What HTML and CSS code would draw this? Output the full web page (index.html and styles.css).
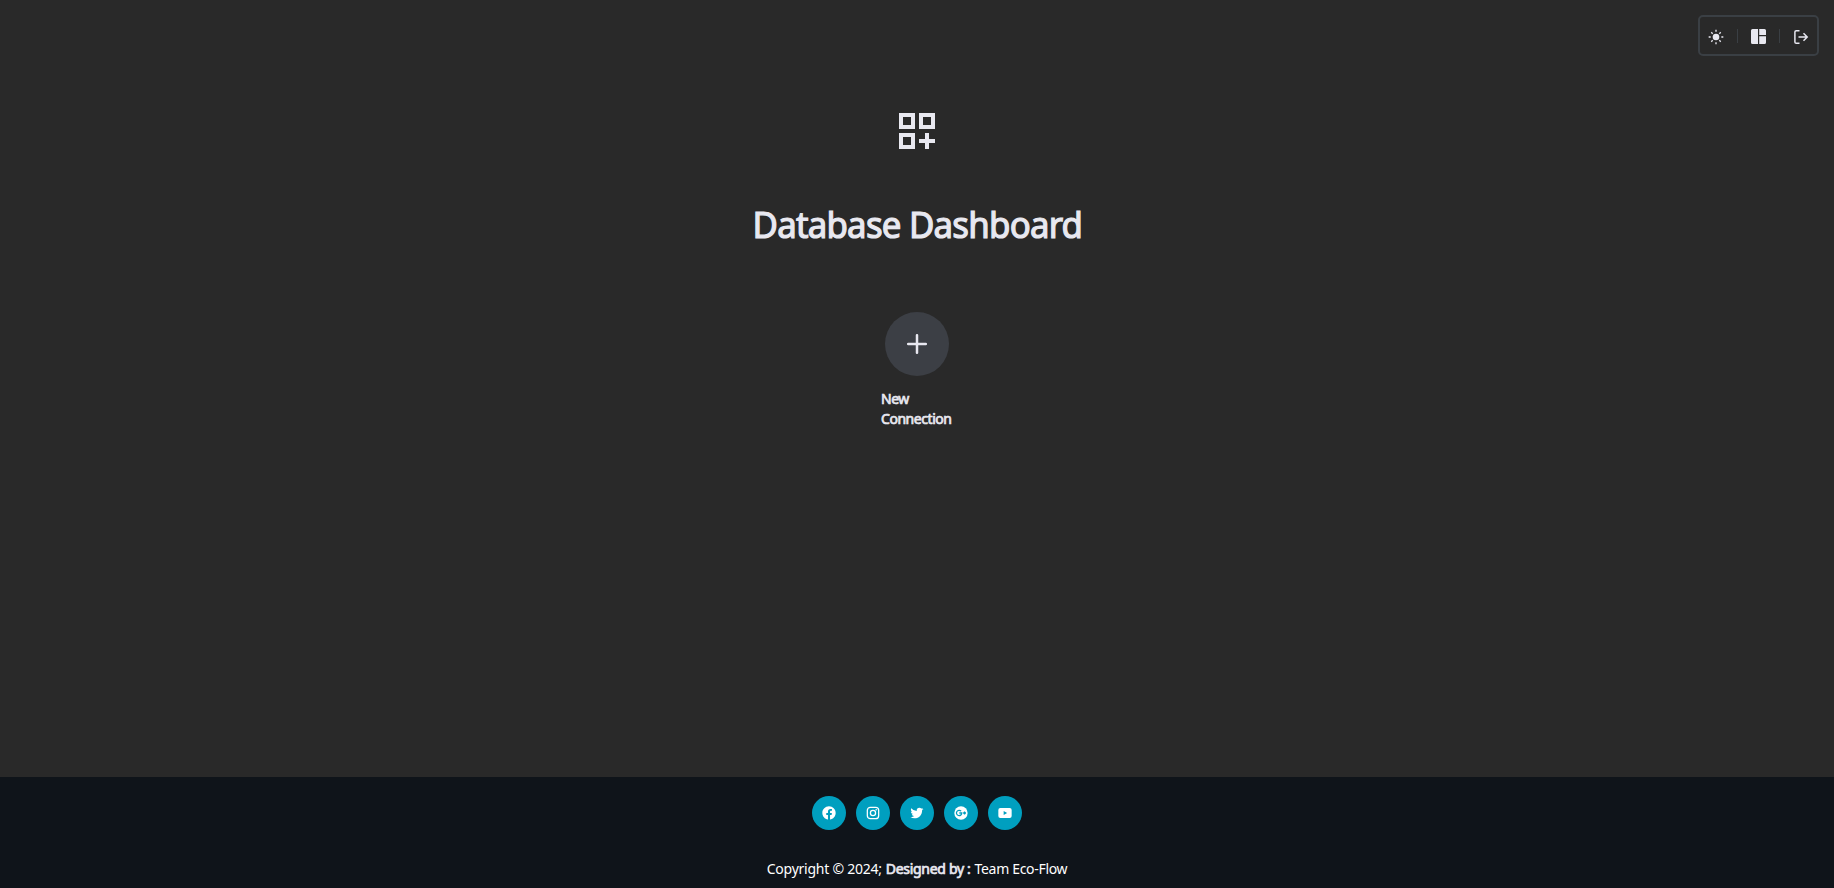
FILE: index.html
```html
<!DOCTYPE html>
<html lang="en">
<head>
<meta charset="utf-8">
<title>Database Dashboard</title>
<link rel="stylesheet" href="styles.css">
</head>
<body>
<header class="topbar">
  <nav class="tools">
    <svg class="tool" viewBox="0 0 24 24"><circle cx="12" cy="12" r="5"/><path d="M11 1h2v3h-2zM11 20h2v3h-2zM1 11h3v2H1zM20 11h3v2h-3zM4.2 5.6l1.4-1.4 2.1 2.1-1.4 1.4zM16.3 17.7l1.4-1.4 2.1 2.1-1.4 1.4zM16.3 6.3l2.1-2.1 1.4 1.4-2.1 2.1zM4.2 18.4l2.1-2.1 1.4 1.4-2.1 2.1z"/></svg>
    <span class="divider"></span>
    <svg class="tool layout" viewBox="0 0 15 15"><path d="M1.500 0H7v15H1.500Q0 15 0 13.500V1.500Q0 0 1.500 0zM8.200 0h5.300Q15 0 15 1.500V6H8.200zM8.200 7.200H15v6.300Q15 15 13.500 15H8.200z"/></svg>
    <span class="divider"></span>
    <svg class="tool logout" viewBox="0 0 16 16"><path d="M6.500 1.700H3.300Q1.900 1.700 1.900 3.100v9.800Q1.900 14.300 3.300 14.300h3.200M5.500 8h8.500M10.500 4.300 14.200 8l-3.700 3.700"/></svg>
  </nav>
</header>
<main class="main">
  <svg class="brand" viewBox="0 0 18 18"><path fill-rule="evenodd" d="M0 0h8v8H0zM2 2v4h4V2zM10 0h8v8h-8zM12 2v4h4V2zM0 10h8v8H0zM2 12v4h4v-4zM13 10h2v3h3v2h-3v3h-2v-3h-3v-2h3z"/></svg>
  <h1 class="title">Database Dashboard</h1>
  <a class="connection">
    <span class="add"><svg class="plus" viewBox="0 0 20 20"><path d="M10 1.200v17.600M1.200 10h17.600"/></svg></span>
    <span class="label">New<br>Connection</span>
  </a>
</main>
<footer class="footer">
  <div class="socials">
    <a class="social"><svg viewBox="0 0 24 24"><path d="M12.001 2.002c-5.522 0-9.999 4.477-9.999 9.999 0 4.990 3.656 9.126 8.437 9.879v-6.988h-2.540v-2.891h2.540V9.798c0-2.508 1.493-3.891 3.776-3.891 1.094 0 2.240.195 2.240.195v2.459h-1.264c-1.240 0-1.628.772-1.628 1.563v1.875h2.771l-.443 2.891h-2.328v6.988C18.344 21.129 22 16.992 22 12.001c0-5.522-4.477-9.999-9.999-9.999z"/></svg></a>
    <a class="social"><svg viewBox="0 0 24 24"><g fill="none" stroke="currentColor" stroke-width="1.900"><rect x="3.500" y="3.500" width="17" height="17" rx="4.500"/><circle cx="12" cy="12" r="3.900"/></g><circle cx="16.800" cy="7.200" r="1.200"/></svg></a>
    <a class="social"><svg viewBox="0 0 24 24"><path d="M19.633 7.997c.013.175.013.349.013.523 0 5.325-4.053 11.461-11.460 11.461-2.282 0-4.402-.661-6.186-1.809.324.037.636.050.973.050a8.070 8.070 0 0 0 5.001-1.721 4.036 4.036 0 0 1-3.767-2.793c.249.037.499.062.761.062.361 0 .724-.050 1.061-.137a4.027 4.027 0 0 1-3.230-3.953v-.050c.537.299 1.160.486 1.820.511a4.022 4.022 0 0 1-1.796-3.354c0-.748.199-1.434.548-2.032a11.457 11.457 0 0 0 8.306 4.215c-.062-.300-.100-.611-.100-.923a4.026 4.026 0 0 1 4.028-4.028c1.160 0 2.207.486 2.943 1.272a7.957 7.957 0 0 0 2.556-.973 4.020 4.020 0 0 1-1.771 2.220 8.073 8.073 0 0 0 2.319-.624 8.645 8.645 0 0 1-2.019 2.083z"/></svg></a>
    <a class="social"><svg viewBox="0 0 24 24"><circle cx="12" cy="12" r="10"/><path class="cut" d="M12.200 9.300A4 4 0 1 0 13.200 12H9.500M17.300 9.800v4.400M15.100 12h4.400"/></svg></a>
    <a class="social"><svg viewBox="0 0 24 24"><path fill-rule="evenodd" d="M5 4.500h14q3 0 3 3v9q0 3-3 3H5q-3 0-3-3v-9q0-3 3-3zM10 9v6l5.200-3z"/></svg></a>
  </div>
  <p class="copy"><span class="copy-a">Copyright © 2024;</span> <b class="by">Designed by :</b> <span class="team">Team Eco-Flow</span></p>
</footer>
</body>
</html>
```
FILE: styles.css
```css
* { box-sizing: border-box; }
html { height: 100%; overflow: hidden; background: #292929; }
body {
  margin: 0;
  height: 100%;
  overflow: hidden;
  display: flex;
  flex-direction: column;
  background: #292929;
  color: #e8e8f0;
  font-family: "Noto Sans", "Open Sans", sans-serif;
  font-weight: 400;
}
.topbar { display: flex; justify-content: flex-end; padding: 15px 15px 0 0; height: 56px; }
.tools {
  display: flex;
  align-items: center;
  justify-content: space-between;
  width: 121px;
  height: 41px;
  padding: 0 8px;
  border: 2px solid #3a3f44;
  border-radius: 5px;
}
.tool { width: 16px; height: 16px; margin-top: 2px; fill: currentColor; }
.layout { width: 15px; height: 15px; margin-top: 1px; }
.logout { fill: none; stroke: currentColor; stroke-width: 1.500; }
.divider { width: 1px; height: 14px; margin-top: 1px; background: #3a3f44; }
.main { flex: 1; display: flex; flex-direction: column; align-items: center; padding-top: 57px; }
.brand { width: 36px; height: 36px; fill: currentColor; }
.title {
  margin: 49px 0 0;
  height: 52px;
  line-height: 52px;
  font-size: 37px;
  font-weight: 400;
  letter-spacing: -0.800px;
  white-space: nowrap;
  transform: scaleX(0.94);
  -webkit-text-stroke: 1.200px currentColor;
}
.connection { display: flex; flex-direction: column; align-items: center; margin-top: 62px; }
.add {
  display: flex;
  align-items: center;
  justify-content: center;
  width: 64px;
  height: 64px;
  border-radius: 50%;
  background: #3c3f45;
}
.plus { width: 20px; height: 20px; fill: none; stroke: currentColor; stroke-width: 2.500; stroke-linecap: round; }
.label {
  width: 72px;
  margin-top: 13px;
  font-size: 14px;
  line-height: 20px;
  letter-spacing: -0.450px;
  white-space: nowrap;
  -webkit-text-stroke: 0.700px currentColor;
}
.footer {
  display: flex;
  flex-direction: column;
  align-items: center;
  height: 111px;
  padding-top: 19px;
  background: #0f141a;
  color: #fff;
}
.socials { display: flex; gap: 10px; }
.social {
  display: flex;
  align-items: center;
  justify-content: center;
  width: 34px;
  height: 34px;
  border-radius: 50%;
  background: #009fbf;
}
.social svg { width: 16px; height: 16px; fill: currentColor; }
.social .cut { fill: none; stroke: #009fbf; stroke-width: 1.900; }
.copy { display: flex; gap: 4px; margin: 29px 0 0; font-size: 14px; line-height: 20px; white-space: nowrap; }
.copy-a { letter-spacing: -0.250px; }
.by { color: #e8e8f0; font-weight: 400; letter-spacing: -0.300px; -webkit-text-stroke: 0.700px currentColor; }
.team { letter-spacing: -0.320px; }
```
